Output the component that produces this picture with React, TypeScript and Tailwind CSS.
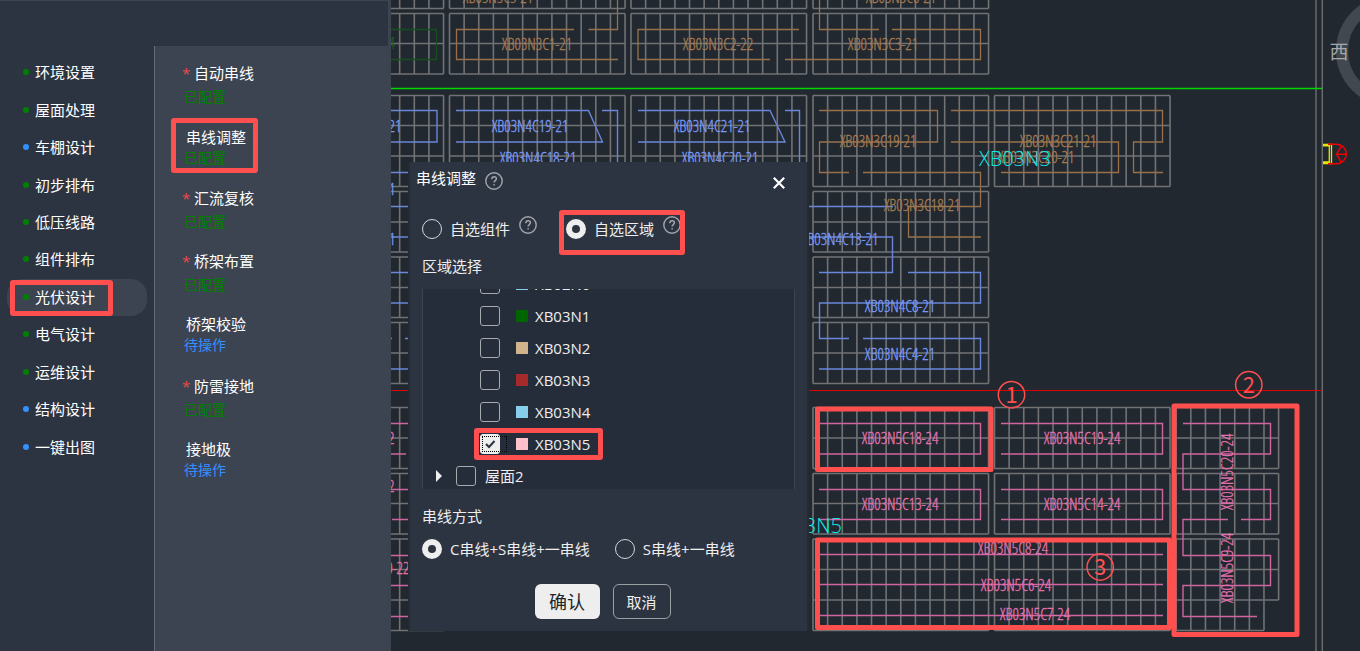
import React from 'react';

type NavItem = { label: string; done: boolean; active?: boolean };
type Step = { label: string; required: boolean; done: boolean; marked?: boolean };

const NAV: NavItem[] = [
  { label: '环境设置', done: true },
  { label: '屋面处理', done: true },
  { label: '车棚设计', done: false },
  { label: '初步排布', done: true },
  { label: '低压线路', done: true },
  { label: '组件排布', done: true },
  { label: '光伏设计', done: true, active: true },
  { label: '电气设计', done: true },
  { label: '运维设计', done: true },
  { label: '结构设计', done: false },
  { label: '一键出图', done: false },
];

const STEPS: Step[] = [
  { label: '自动串线', required: true, done: true },
  { label: '串线调整', required: false, done: true, marked: true },
  { label: '汇流复核', required: true, done: true },
  { label: '桥架布置', required: true, done: true },
  { label: '桥架校验', required: false, done: false },
  { label: '防雷接地', required: true, done: true },
  { label: '接地极', required: false, done: false },
];

const ZONES = [
  { name: 'XB02N6', swatch: 'bg-[#87ceeb]' },
  { name: 'XB03N1', swatch: 'bg-[#006400]' },
  { name: 'XB03N2', swatch: 'bg-[#d2b48c]' },
  { name: 'XB03N3', swatch: 'bg-[#a52a2a]' },
  { name: 'XB03N4', swatch: 'bg-[#87ceeb]' },
  { name: 'XB03N5', swatch: 'bg-[#ffc0cb]', checked: true },
];

const CELL = 14.63;

/* Module arrays: left edge, columns, and the y of every horizontal rail. */
const COLS = [268, 449.5, 631, 813, 994.5];
const ROWS: { ys: number[]; cols: number[] }[] = [
  { ys: [-22, 8.5], cols: [0, 1, 2, 3] },
  { ys: [13.5, 43.5, 74], cols: [0, 1, 2, 3] },
  { ys: [95.5, 125.5, 156, 186.5], cols: [0, 1, 2, 3, 4] },
  { ys: [191.5, 222, 252], cols: [0, 1, 2, 3] },
  { ys: [257, 287.5, 317.5], cols: [0, 1, 2, 3] },
  { ys: [322.5, 353, 383.5], cols: [0, 1, 2, 3] },
  { ys: [407.5, 438, 468.5], cols: [0, 1, 2, 3, 4] },
  { ys: [473.5, 503.5, 534], cols: [0, 1, 2, 3, 4] },
  { ys: [539, 569.5, 600, 630.5], cols: [0, 3, 4] },
];

function gridPath(x: number, n: number, ys: number[]) {
  const right = x + n * CELL;
  const top = ys[0];
  const bottom = ys[ys.length - 1];
  let d = '';
  for (let i = 0; i <= n; i++) d += `M${x + i * CELL} ${top}V${bottom}`;
  for (const y of ys) d += `M${x} ${y}H${right}`;
  return d;
}

const GRID =
  ROWS.map((r) => r.cols.map((c) => gridPath(COLS[c], 12, r.ys)).join('')).join('') +
  gridPath(1176.2, 7, [407.5, 438, 468.5]) +
  gridPath(1176.2, 7, [473.5, 503.5, 534]) +
  gridPath(1176.2, 7, [539, 569.5, 600]) +
  gridPath(1176.2, 6, [600, 630.5]);

const BROWN =
  'M574 29.5H456.5V59.5H618M588.5 29.5H617.5V0M799 29.5H638V59.5H770M785 59.5H980.5V29.5H892M879 29.5H819.5V0' +
  'M819 110.5H937.5V142H819.5V172.5H849M863 172.5H980.5V206.5H908.5V237H981' +
  'M951 110.5H1162.5V142H1133.5V172.5H1163M951 142H1118.5V172.5H1001';
const BLUE =
  'M391 110.5H437V142H391M456 110.5H588.5L602.5 142H456M602 110.5H617.5V200M638 110.5H770L785 142H638M785 110.5H799.5V200' +
  'M800 206.5H893M800 237H892.5V272.5H819M908 272.5H980.5V303H819.5V338.5H849M863 338.5H980.5V369H819' +
  'M391 172.5H420M391 206.5H420M391 237H420M391 272.5H420M391 303H420M391 338.5H392M405 338.5H420M391 369H420';
const PINK =
  'M819 423.5H980.5V454H819M1001 423.5H1162.5V454H1001M819 489.5H980.5V519.5H819M1001 489.5H1162.5V519.5H1001' +
  'M819 554.5H1163M819 584.5H1163M819 615.5H1163' +
  'M1183 423.5H1270.5V454H1183V489.5H1270.5V519.5H1241M1228 519.5H1183V555.5H1270.5V585.5H1183V616.5H1257' +
  'M391 423.5H420M391 454H406M391 489.5H420M392 519.5H420M391 555.5H420M391 585.5H420M391 616.5H420';

/* [middle x, baseline y, text] */
type Tag = [number, number, string];
const BROWN_TAGS: Tag[] = [
  [498, 3, 'XB03N3C5-21'],
  [901, 3, 'XB03N3C6-21'],
  [537, 50, 'XB03N3C1-21'],
  [718, 50, 'XB03N3C2-22'],
  [883, 50, 'XB03N3C3-21'],
  [878, 147, 'XB03N3C19-21'],
  [922, 211, 'XB03N3C18-21'],
  [1058, 147, 'XB03N3C21-21'],
  [1036, 163, 'XB03N3C20-21'],
];
const BLUE_TAGS: Tag[] = [
  [363, 132, 'XB03N4C17-21'],
  [530, 132, 'XB03N4C19-21'],
  [538, 164, 'XB03N4C18-21'],
  [712, 132, 'XB03N4C21-21'],
  [720, 164, 'XB03N4C20-21'],
  [840, 245, 'XB03N4C13-21'],
  [900, 312, 'XB03N4C8-21'],
  [900, 360, 'XB03N4C4-21'],
  [357, 195, 'XB03N4C12-21'],
  [357, 245, 'XB03N4C11-21'],
];
const PINK_TAGS: Tag[] = [
  [900, 444, 'XB03N5C18-24'],
  [1082, 444, 'XB03N5C19-24'],
  [900, 510, 'XB03N5C13-24'],
  [1082, 510, 'XB03N5C14-24'],
  [1013, 554, 'XB03N5C8-24'],
  [1016, 591, 'XB03N5C6-24'],
  [1035, 620, 'XB03N5C7-24'],
  [356, 444, 'XB03N5C15-22'],
  [356, 492, 'XB03N5C12-22'],
  [371, 574, 'XB03N5C10-22'],
];

function Tags({ items, color }: { items: Tag[]; color: string }) {
  return (
    <g fill={color} stroke={color} strokeWidth="0.3" textAnchor="middle">
      {items.map(([x, y, t]) => (
        <text key={t} x={x} y={y}>{t}</text>
      ))}
    </g>
  );
}

function Drawing() {
  return (
    <svg
      viewBox="391 0 969 651"
      preserveAspectRatio="xMinYMin slice"
      className="absolute inset-0 size-full text-[16px] font-light font-['Open_Sans_Condensed_Light','Open_Sans_Condensed','Roboto_Condensed',sans-serif]"
      role="img"
      aria-label="光伏串线图"
    >
      <g fill="none">
        <path d={GRID} stroke="#707274" strokeWidth="1.6" />
        <path d="M1316 0V651M1322.3 0V651" stroke="#6c6e70" strokeWidth="1.4" />
        <path d={BROWN} stroke="#98714a" strokeWidth="1.3" />
        <path d={BLUE} stroke="#6a86da" strokeWidth="1.4" />
        <path d={PINK} stroke="#cf649e" strokeWidth="1.4" />
        <path d="M391 29.5H436.5V59.5H391" stroke="#14501c" strokeWidth="1.3" />
        <path d="M391 88.5H1322" stroke="#00d800" strokeWidth="1.3" />
        <path d="M391 390.5H1322" stroke="#e30000" strokeWidth="1.2" />
      </g>
      <Tags items={BROWN_TAGS} color="#a67b50" />
      <Tags items={BLUE_TAGS} color="#7b9bfa" />
      <Tags items={PINK_TAGS} color="#e872b1" />
      <text x="395" y="49" textAnchor="end" fill="#14601c" stroke="#14601c" strokeWidth="0.3">XB03N1C1-24</text>
      <g fill="#e872b1" stroke="#e872b1" strokeWidth="0.3" textAnchor="middle">
        <text transform="translate(1233 472) rotate(-90)">XB03N5C20-24</text>
        <text transform="translate(1233 568) rotate(-90)">XB03N5C9-24</text>
      </g>
      <g fill="#10e8e8" className="text-[20px] font-light font-['Open_Sans','Noto_Sans',sans-serif]">
        <text x="979" y="166">XB03N3</text>
        <text x="842" y="533" textAnchor="end">XB03N5</text>
      </g>

      <g fill="none" strokeWidth="1.5">
        <circle cx="1392" cy="51" r="50" stroke="#42484f" strokeWidth="12" />
        <path d="M1323 144.5H1331.5V163.5H1323M1323 145.8H1329.3V162H1323" stroke="#e6e600" strokeWidth="1.3" />
        <path d="M1328 144.2H1336.5A9.8 9.8 0 0 1 1336.5 163.8H1328M1347 154.2H1336.5L1341.5 146M1336.5 154.2L1341.5 162.5" stroke="#f00000" />
      </g>
      <text x="1339" y="59" textAnchor="middle" fill="#a6a8aa" className="text-[19px] font-normal font-['Noto_Sans_CJK_SC',sans-serif]">西</text>

      <g fill="none" stroke="#ff4f4f" strokeWidth="5" strokeLinejoin="round">
        <rect x="817.5" y="409" width="173.5" height="60.5" />
        <rect x="1174" y="406" width="123" height="228.5" />
        <rect x="817.5" y="540" width="352" height="87.5" />
      </g>
      <g fill="none" stroke="#ff4f4f" strokeWidth="1.5">
        <circle cx="1011.5" cy="394.7" r="13.2" />
        <circle cx="1248.8" cy="384.8" r="13.2" />
        <circle cx="1100.2" cy="567" r="13.2" />
      </g>
      <g fill="#ff4f4f" textAnchor="middle" className="text-[22px] font-normal font-['Noto_Sans_CJK_SC',sans-serif]">
        <text x="1011.5" y="403">1</text>
        <text x="1248.8" y="393">2</text>
        <text x="1100.2" y="575">3</text>
      </g>
    </svg>
  );
}

function HelpIcon() {
  return (
    <svg viewBox="0 0 18 18" className="size-[18px] shrink-0" fill="none" stroke="#a3a6ab" strokeWidth="1.4">
      <circle cx="9" cy="9" r="8.2" />
      <path d="M6.8 7.2C6.8 5.6 7.8 4.7 9.1 4.7s2.3.9 2.3 2.1c0 1.7-2.3 1.9-2.3 3.7" />
      <path d="M9.1 12v1.5" />
    </svg>
  );
}

const radioClass =
  'size-5 shrink-0 appearance-none rounded-full border border-[#d4d5d7] checked:border-[6px] checked:border-[#eeeeee]';
const boxClass =
  'size-5 shrink-0 appearance-none rounded-[3px] border border-[#a6a9ae] checked:border-[#eeeeee] checked:bg-[#eeeeee]';
const markClass = 'pointer-events-none absolute rounded-[3px] border-[5px] border-[#ff4f4f]';

function Dialog() {
  return (
    <section
      role="dialog"
      aria-labelledby="dialog-title"
      className="absolute top-[162px] left-[17px] w-[401px] border-x-2 border-[#242b32] bg-[#2d3441] pb-3 text-[15px] leading-5 text-[#eeeeee]"
    >
      <header className="flex items-start pt-1.5 pr-5 pl-1.5">
        <h2 id="dialog-title" className="text-white">串线调整</h2>
        <button type="button" aria-label="帮助" className="mt-1 ml-[9px]">
          <HelpIcon />
        </button>
        <button type="button" aria-label="关闭" className="mt-[7px] ml-auto p-0.5">
          <svg viewBox="0 0 12 12" className="size-3" stroke="#fff" strokeWidth="2.2" fill="none">
            <path d="M.8.8l10.4 10.4M11.2.8L.8 11.2" />
          </svg>
        </button>
      </header>

      <div className="px-3">
        <fieldset className="mt-[25px] flex items-center">
          <label className="flex items-center gap-2">
            <input type="radio" name="pick" className={radioClass} />
            自选组件
          </label>
          <button type="button" aria-label="帮助" className="mb-2 ml-[9px]">
            <HelpIcon />
          </button>
          <div className="relative ml-[29px] flex items-center">
            <label className="flex items-center gap-2">
              <input type="radio" name="pick" defaultChecked className={radioClass} />
              自选区域
            </label>
            <button type="button" aria-label="帮助" className="mb-2 ml-[9px]">
              <HelpIcon />
            </button>
            <span className={`${markClass} -top-1.5 -right-[4px] -bottom-[13px] -left-[7px]`} />
          </div>
        </fieldset>

        <h3 className="mt-3.5">区域选择</h3>
        <div className="mt-[13px] h-[200px] overflow-hidden border-x border-[#3c4452] bg-[#262d3a]">
          <ul className="-mt-[21px]">
            {ZONES.map((z) => (
              <li key={z.name} className="flex h-8 items-center pl-[57px]">
                <label className="relative flex items-center">
                  <input type="checkbox" defaultChecked={z.checked} className={boxClass} />
                  {z.checked && (
                    <>
                      <svg viewBox="0 0 20 20" className="absolute left-0 size-5" fill="none" stroke="#2d3441" strokeWidth="2">
                        <path d="M6 10l3 3 5.5-6" />
                      </svg>
                      <span className="absolute top-0.5 left-0.5 h-4 w-[25px] border border-dotted border-black" />
                      <span className={`${markClass} -top-[6px] -right-[13px] -bottom-[6px] -left-[6px]`} />
                    </>
                  )}
                  <span className={`ml-4 size-3 ${z.swatch}`} />
                  <span className="ml-[7px]">{z.name}</span>
                </label>
              </li>
            ))}
            <li className="flex h-8 items-center pl-[13px]">
              <button type="button" aria-label="展开" className="mr-3.5">
                <svg viewBox="0 0 6 12" className="h-3 w-1.5" fill="#eeeeee">
                  <path d="M0 0l6 6-6 6z" />
                </svg>
              </button>
              <label className="flex items-center gap-[9px]">
                <input type="checkbox" className={boxClass} />
                屋面2
              </label>
            </li>
          </ul>
        </div>

        <h3 className="mt-[17px]">串线方式</h3>
        <fieldset className="mt-[13px] flex items-center gap-[25px]">
          <label className="flex items-center gap-2">
            <input type="radio" name="mode" defaultChecked className={radioClass} />
            C串线+S串线+一串线
          </label>
          <label className="flex items-center gap-2">
            <input type="radio" name="mode" className={radioClass} />
            S串线+一串线
          </label>
        </fieldset>

        <div className="mt-[25px] flex justify-center gap-[13px] pr-3">
          <button type="button" className="h-[35px] w-[65px] rounded-md bg-[#eeeeee] text-lg text-[#20242b]">确认</button>
          <button type="button" className="h-[35px] w-[58px] rounded-md border border-[#9b9ea3]">取消</button>
        </div>
      </div>
    </section>
  );
}

function Sidebar() {
  return (
    <aside className="flex w-[391px] shrink-0 flex-col bg-[#2d3441] text-[15px] leading-5 text-white">
      <div className="h-[46px] border-t border-r-[3px] border-[#3c4452]" />
      <div className="flex grow">
        <nav className="w-[154px] pt-2 pr-[7px] pl-[7px]">
          <ul className="flex h-[412px] flex-col">
            {NAV.map((n) => (
              <li key={n.label} className="flex-1">
                <a
                  href="#"
                  className={`relative flex h-full items-center gap-1.5 rounded-2xl pb-px pl-4 ${n.active ? 'bg-[#3c4452]' : ''}`}
                >
                  <span className={`size-1.5 rounded-full ${n.done ? 'bg-[#008000]' : 'bg-[#3390ff]'}`} />
                  {n.label}
                  {n.active && <span className={`${markClass} top-px bottom-0 left-[3px] w-[103px]`} />}
                </a>
              </li>
            ))}
          </ul>
        </nav>
        <div className="grow border-l border-[#666d78] bg-[#3c4452] pt-[17px] pl-[27px]">
          <ul className="flex h-[438px] flex-col">
            {STEPS.map((s) => (
              <li key={s.label} className="flex-1">
                <a href="#" className="relative block w-[86px]">
                  <span className={s.required ? 'flex' : 'flex pl-1 pt-px'}>
                    {s.required && <span className="w-3 text-[#f04848]">*</span>}
                    {s.label}
                  </span>
                  <span
                    className={`block pl-0.5 text-sm ${s.required ? 'mt-1' : 'mt-px'} ${s.done ? 'text-[#008000]' : 'text-[#3390ff]'}`}
                  >
                    {s.done ? '已配置' : '待操作'}
                  </span>
                  {s.marked && <span className={`${markClass} -top-2 -bottom-[5px] -left-[11px] w-[87px]`} />}
                </a>
              </li>
            ))}
          </ul>
        </div>
      </div>
    </aside>
  );
}

export default function App() {
  return (
    <div className="flex min-h-screen overflow-hidden bg-[#222830] font-['Open_Sans','Noto_Sans_CJK_SC',sans-serif]">
      <Sidebar />
      <main className="relative grow overflow-hidden">
        <Drawing />
        <Dialog />
      </main>
    </div>
  );
}
